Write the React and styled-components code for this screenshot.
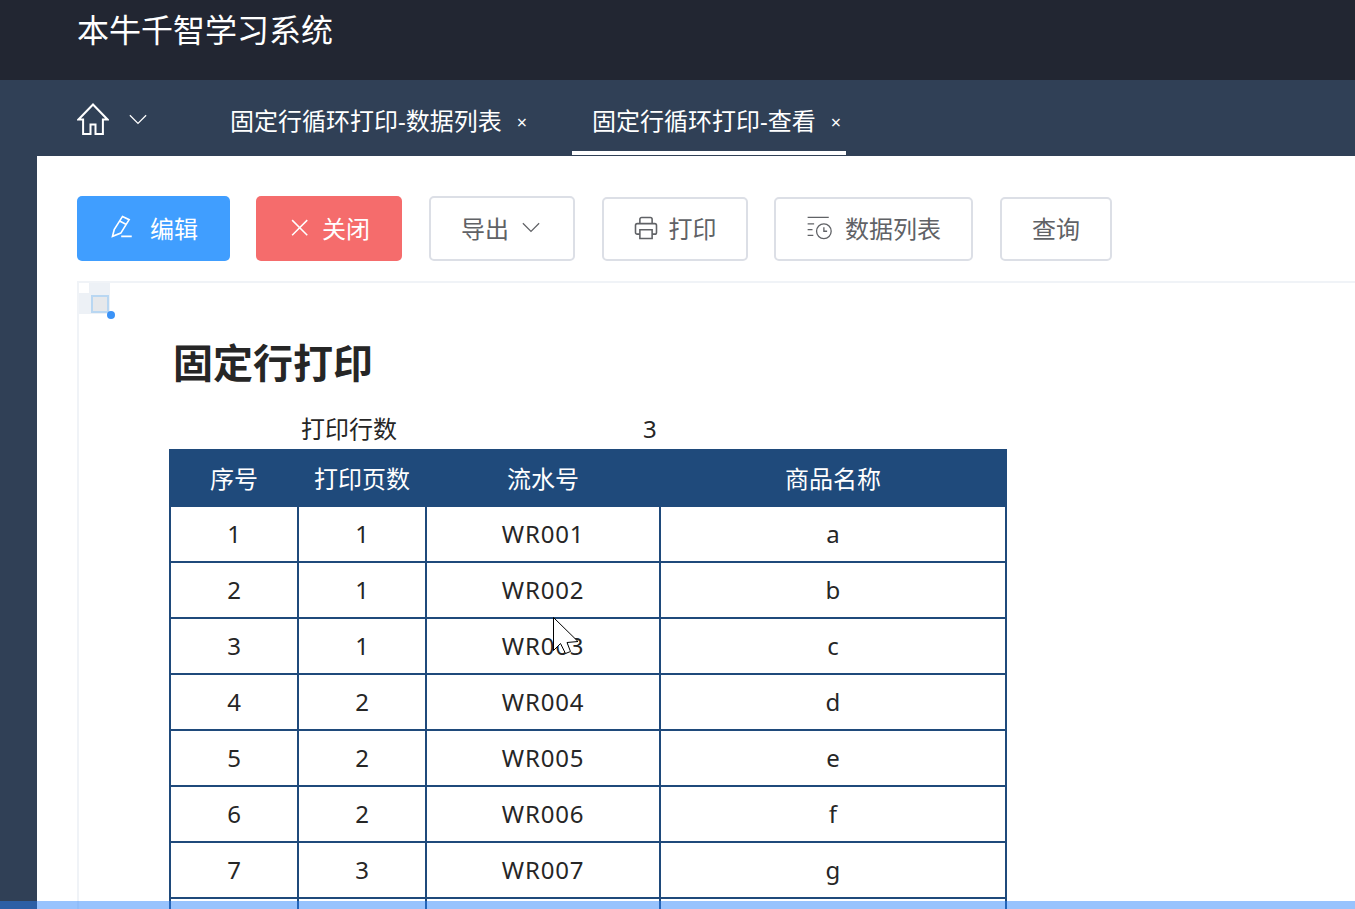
import styled, { createGlobalStyle } from 'styled-components'

const GlobalStyle = createGlobalStyle`
  html, body {
    margin: 0;
    height: 100%;
    overflow: hidden;
    background: #fff;
    font-family: "Noto Sans", "Noto Sans CJK SC", sans-serif;
  }
  * { box-sizing: border-box; }
`
const Page = styled.div`
  position: relative;
  width: 100%;
  height: 909px;
  overflow: hidden;
  display: flex;
  flex-direction: column;
`
const Header = styled.header`
  height: 80px;
  flex: none;
  background: #222632;
  padding-left: 77px;
  color: #fff;
  font-size: 32px;
  line-height: 60px;
`
const TabBar = styled.nav`
  height: 76px;
  flex: none;
  background: #304056;
  display: flex;
  padding-left: 77px;
  color: #fff;
`
const HomeTab = styled.div`
  width: 133px;
  height: 76px;
  display: flex;
  align-items: center;
  gap: 19px;
  padding-top: 2px;
`
const Tab = styled.div`
  height: 75px;
  padding: 8px 5px 0 20px;
  margin-right: ${p => p.$gap || 0}px;
  display: flex;
  align-items: center;
  font-size: 24px;
  border-bottom: 4px solid ${p => (p.$active ? '#fff' : 'transparent')};
`
const TabClose = styled.span`
  margin-left: 15px;
  font-size: 18px;
  line-height: 1;
  padding-top: 4px;
`
const Main = styled.div`
  flex: 1;
  display: flex;
  min-height: 0;
`
const Sidebar = styled.aside`
  width: 37px;
  flex: none;
  background: #304056;
`
const Content = styled.main`
  flex: 1;
  min-width: 0;
  background: #fff;
`
const Toolbar = styled.div`
  display: flex;
  align-items: flex-start;
  padding: 40px 0 20px 40px;
`
const Button = styled.button`
  width: ${p => p.$width}px;
  height: ${p => (p.$tall ? 65 : 64)}px;
  margin-top: ${p => (p.$tall ? 0 : 1)}px;
  margin-right: ${p => p.$gap}px;
  flex: none;
  display: flex;
  align-items: center;
  justify-content: center;
  gap: ${p => p.$iconGap || 0}px;
  padding: 0 ${p => p.$shift || 0}px 3px 0;
  border-radius: 5px;
  font: inherit;
  font-size: 24px;
  color: ${p => (p.$bg ? '#fff' : '#606266')};
  background: ${p => p.$bg || '#fff'};
  border: ${p => (p.$bg ? 'none' : '2px solid #dcdfe6')};
`
const Doc = styled.section`
  position: relative;
  margin-left: 40px;
  height: 640px;
  border-top: 2px solid #f0f3f7;
  border-left: 2px solid #f0f3f7;
  padding: 54px 0 0 90px;
`
const CornerHandle = styled.div`
  position: absolute;
  left: 0;
  top: 0;
  width: 31px;
  height: 31px;
  background:
    linear-gradient(#fff, #fff) 0 0 / 10px 10px no-repeat,
    #edf1f6;
`
const CornerBox = styled.div`
  position: absolute;
  left: 12px;
  top: 12px;
  width: 18px;
  height: 18px;
  background: #e6e8eb;
  border: 2px solid #b9d7f2;
`
const CornerDot = styled.div`
  position: absolute;
  left: 28px;
  top: 28px;
  width: 8px;
  height: 8px;
  border-radius: 50%;
  background: #3b93f7;
`
const Title = styled.h1`
  margin: 0 0 0 4px;
  font-size: 40px;
  line-height: 52px;
  font-weight: 700;
  color: #262626;
`
const Meta = styled.div`
  display: flex;
  margin-top: 20px;
  height: 40px;
  font-size: 24px;
  line-height: 40px;
  color: #262626;
`
const MetaLabel = styled.span`
  width: 342px;
  margin-left: 132px;
`
const PrintTable = styled.table`
  border-collapse: collapse;
  table-layout: fixed;
  width: 836px;
  font-size: 24px;
  color: #262626;
  text-align: center;
  th, td { border: 2px solid #1f4a7b; padding: 0 0 2px; }
  th {
    height: 56px;
    background: #1f4a7b;
    color: #fff;
    font-weight: 400;
  }
  td { height: 56px; }
`
const CodeCell = styled.td`
  letter-spacing: 0.8px;
`
const Cursor = styled.svg`
  position: absolute;
  left: 553px;
  top: 617px;
`
const LoadBar = styled.div`
  position: absolute;
  left: 0;
  right: 0;
  bottom: 0;
  height: 8px;
  background: rgba(40, 130, 250, 0.48);
`

const rows = [
  [1, 1, 'WR001', 'a'],
  [2, 1, 'WR002', 'b'],
  [3, 1, 'WR003', 'c'],
  [4, 2, 'WR004', 'd'],
  [5, 2, 'WR005', 'e'],
  [6, 2, 'WR006', 'f'],
  [7, 3, 'WR007', 'g'],
  ['', '', '', '']
]

const Stroke = ({ size, children, width = 1.5 }) => (
  <svg width={size} height={size} viewBox="0 0 32 32" fill="none" stroke="currentColor" strokeWidth={width}>
    {children}
  </svg>
)

const Chevron = ({ size = 20 }) => (
  <Stroke size={size} width={2}>
    <path d="M3 10l13 13 13-13"/>
  </Stroke>
)

export default function App () {
  return (
    <Page>
      <GlobalStyle/>
      <Header>本牛千智学习系统</Header>
      <TabBar>
        <HomeTab>
          <Stroke size={32} width={2}>
            <path d="M16 1.5 1.5 16.5h4.6V31h7.4v-9.5h5V31h7.4V16.5h4.6z"/>
          </Stroke>
          <Chevron/>
        </HomeTab>
        <Tab $gap={40}>固定行循环打印-数据列表<TabClose>×</TabClose></Tab>
        <Tab $active>固定行循环打印-查看<TabClose>×</TabClose></Tab>
      </TabBar>
      <Main>
        <Sidebar/>
        <Content>
          <Toolbar>
            <Button $tall $bg="#409eff" $width={153} $gap={26} $iconGap={15}>
              <Stroke size={26} width={2}>
                <path d="M16.6 3l8.2 4-10.3 16.5-10.200 4 2.100-8.200zM13.700 9l8.200 4.300M15 27.600h13"/>
              </Stroke>
              编辑
            </Button>
            <Button $tall $bg="#f56c6c" $width={146} $gap={27} $iconGap={12}>
              <Stroke size={22} width={2.2}>
                <path d="M6 6l22 22M28 6 6 28"/>
              </Stroke>
              关闭
            </Button>
            <Button $tall $shift={2} $width={146} $gap={27} $iconGap={12}>
              导出
              <Chevron/>
            </Button>
            <Button $shift={2} $width={146} $gap={26} $iconGap={9}>
              <Stroke size={28} width={1.8}>
                <path d="M9 11V6a2 2 0 0 1 2-2h10a2 2 0 0 1 2 2v5M9 23H6a2 2 0 0 1-2-2v-8a2 2 0 0 1 2-2h20a2 2 0 0 1 2 2v8a2 2 0 0 1-2 2h-3M9 18h14v10H9z"/>
              </Stroke>
              打印
            </Button>
            <Button $width={199} $gap={27} $iconGap={13}>
              <Stroke size={26} width={1.6}>
                <path d="M2 3h26M2 11h8M2 18h6M2 25h7"/>
                <circle cx="22" cy="20" r="9"/>
                <path d="M22 15v5h4"/>
              </Stroke>
              数据列表
            </Button>
            <Button $width={112} $gap={0}>查询</Button>
          </Toolbar>
          <Doc>
            <CornerHandle/>
            <CornerBox/>
            <CornerDot/>
            <Title>固定行打印</Title>
            <Meta>
              <MetaLabel>打印行数</MetaLabel>
              <span>3</span>
            </Meta>
            <PrintTable>
              <colgroup>
                <col width="128"/>
                <col width="128"/>
                <col width="234"/>
                <col width="346"/>
              </colgroup>
              <thead>
                <tr>
                  <th>序号</th>
                  <th>打印页数</th>
                  <th>流水号</th>
                  <th>商品名称</th>
                </tr>
              </thead>
              <tbody>
                {rows.map((row, r) => (
                  <tr key={r}>
                    <td>{row[0]}</td>
                    <td>{row[1]}</td>
                    <CodeCell>{row[2]}</CodeCell>
                    <td>{row[3]}</td>
                  </tr>
                ))}
              </tbody>
            </PrintTable>
          </Doc>
        </Content>
      </Main>
      <Cursor width="30" height="40" viewBox="0 0 30 40">
        <path d="M.5.5v33l7-7 5 10 5-2-3.500-9 11-1z" fill="#fff" stroke="#000" strokeWidth="1"/>
      </Cursor>
      <LoadBar/>
    </Page>
  )
}
